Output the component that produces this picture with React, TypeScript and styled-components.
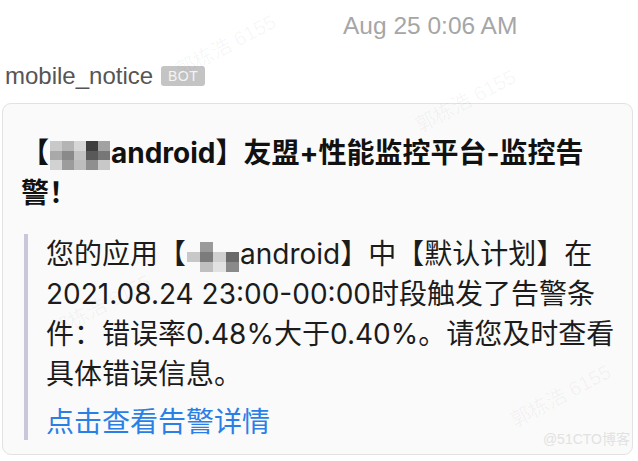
import React from "react";
import styled, { createGlobalStyle } from "styled-components";

const Global = createGlobalStyle`
  html, body { margin: 0; padding: 0; background: #ffffff; }
  body { font-family: "Liberation Sans", "Noto Sans CJK SC", sans-serif; }
`;

const Page = styled.div`
  position: relative;
  width: 638px;
  height: 461px;
  overflow: hidden;
  display: flex;
  flex-direction: column;
  box-sizing: border-box;
  padding: 0 5px 0 2px;
`;

const TimeRow = styled.div`
  display: flex;
  justify-content: flex-start;
  padding: 11px 0 0 341px;
  height: 30px;
  font-size: 24.5px;
  line-height: 30px;
  color: #a6a6a6;
`;

const SenderRow = styled.div`
  display: flex;
  align-items: center;
  gap: 8px;
  margin-top: 22px;
  padding-left: 3px;
  height: 26px;
`;

const SenderName = styled.span`
  font-size: 24px;
  color: #555555;
  line-height: 26px;
`;

const Badge = styled.span`
  display: inline-flex;
  align-items: center;
  justify-content: center;
  width: 44px;
  height: 20px;
  border-radius: 3px;
  background: #c4c4c4;
  color: #f4f4f4;
  font-size: 14px;
  letter-spacing: 0.5px;
`;

const Card = styled.div`
  margin-top: 14px;
  width: 631px;
  height: 352px;
  box-sizing: border-box;
  border: 1px solid #e2e2e2;
  border-radius: 9px;
  background: #fafafa;
  padding: 29px 12px 18px 18px;
  display: flex;
  flex-direction: column;
  font-family: Inter, "Noto Sans CJK SC", sans-serif;
`;

const Title = styled.div`
  font-size: 28px;
  line-height: 40px;
  font-weight: 700;
  color: #111111;
  padding-right: 16px;
`;

const Quote = styled.div`
  margin: 21px 0 0 3px;
  border-left: 4px solid #c8c8da;
  padding-left: 18px;
  display: flex;
  flex-direction: column;
`;

const Body = styled.div`
  font-size: 28px;
  line-height: 40px;
  color: #1c1c1c;
`;

const Link = styled.a`
  margin-top: 10px;
  font-size: 28px;
  line-height: 36px;
  color: #2a7fe6;
  text-decoration: none;
`;

const MosaicFrame = styled.span<{ $drop: number }>`
  display: inline-block;
  overflow: hidden;
  vertical-align: ${(p) => -p.$drop}px;
  margin: 0 1px;
  line-height: 0;
`;

const MosaicGrid = styled.span<{ $cols: number; $w: number; $h: number }>`
  display: grid;
  grid-template-columns: repeat(${(p) => p.$cols}, ${(p) => p.$w}px);
  grid-auto-rows: ${(p) => p.$h}px;
`;

const Cell = styled.span<{ $c: string }>`
  background: ${(p) => p.$c};
`;

const Mosaic: React.FC<{
  cols: number;
  w: number;
  h: number;
  drop: number;
  colors: string[];
}> = ({ cols, w, h, drop, colors }) => (
  <MosaicFrame $drop={drop}>
    <MosaicGrid $cols={cols} $w={w} $h={h}>
      {colors.map((c, i) => (
        <Cell key={i} $c={c} />
      ))}
    </MosaicGrid>
  </MosaicFrame>
);

const Watermark = styled.span<{ $x: number; $y: number }>`
  position: absolute;
  left: ${(p) => p.$x}px;
  top: ${(p) => p.$y}px;
  transform: rotate(-28deg);
  font-size: 20px;
  color: rgba(0, 0, 0, 0.045);
  white-space: nowrap;
  pointer-events: none;
`;

const Credit = styled.span`
  position: absolute;
  right: 8px;
  bottom: 13px;
  font-size: 14px;
  color: #e2e2e2;
`;

const titleMosaic = [
  "#c9c9c9", "#b4b4b4", "#d6d6d6", "#3e3e3e", "#a2a2a2",
  "#a9a9a9", "#8a8a8a", "#c2c2c2", "#595959", "#777777",
  "#d2d2d2", "#9c9c9c", "#bdbdbd", "#8f8f8f", "#c8c8c8",
];

const bodyMosaic = [
  "#fafafa", "#9a9a9a", "#fafafa", "#fafafa",
  "#c8c8c8", "#7c7c7c", "#d0d0d0", "#6a6a6a",
  "#fafafa", "#c0c0c0", "#e2e2e2", "#8a8a8a",
];

const line1a = "您的应用【";
const line1b = "android】中【默认计划】在2021.08.24 23:00-00:00时段触发了告警条件：错误率0.48%大于0.40%。请您及时查看具体错误信息。";

export default function App() {
  return (
    <>
      <Global />
      <Page>
        <TimeRow>Aug 25 0:06 AM</TimeRow>
        <SenderRow>
          <SenderName>mobile_notice</SenderName>
          <Badge>BOT</Badge>
        </SenderRow>
        <Card>
          <Title>
            {"【"}
            <Mosaic cols={5} w={12} h={9.6} drop={7} colors={titleMosaic} />
            {"android】友盟+性能监控平台-监控告警！"}
          </Title>
          <Quote>
            <Body>
              {line1a}
              <Mosaic cols={4} w={13} h={10} drop={8} colors={bodyMosaic} />
              {line1b}
            </Body>
            <Link href="#">点击查看告警详情</Link>
          </Quote>
        </Card>
        <Watermark $x={170} $y={30}>郭栋浩 6155</Watermark>
        <Watermark $x={410} $y={85}>郭栋浩 6155</Watermark>
        <Watermark $x={45} $y={290}>郭栋浩 6155</Watermark>
        <Watermark $x={505} $y={380}>郭栋浩 6155</Watermark>
        <Credit>@51CTO博客</Credit>
      </Page>
    </>
  );
}
